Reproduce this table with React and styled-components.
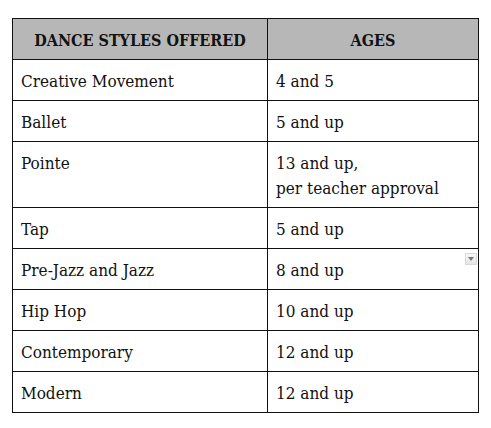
import React from "react";
import styled, { createGlobalStyle } from "styled-components";

const GlobalStyle = createGlobalStyle`
  body {
    margin: 0;
    background: #ffffff;
    font-family: "DejaVu Serif Condensed", "DejaVu Serif", "Liberation Serif", serif;
  }
`;

const Page = styled.div`
  padding: 18px 0 0 12px;
`;

const Table = styled.table`
  border-collapse: collapse;
  width: 466px;
  table-layout: fixed;
  color: #111;
  font-size: 17px;
  line-height: 25px;
`;

const Th = styled.th`
  box-sizing: border-box;
  width: ${(p) => p.w}px;
  background: #b7b7b7;
  border: 1px solid #111;
  padding: 9px 8px 6px;
  font-size: 16px;
  font-weight: bold;
  text-transform: uppercase;
  text-align: center;
`;

const Td = styled.td`
  position: relative;
  border: 1px solid #111;
  padding: 9px 8px 6px;
  text-align: left;
  vertical-align: top;
`;

const DropButton = styled.span`
  position: absolute;
  top: 4px;
  right: 1px;
  width: 12px;
  height: 12px;
  box-sizing: border-box;
  border: 1px solid #d8d8d8;
  background: linear-gradient(#f7f7f7, #e6e6e6);
  display: flex;
  align-items: center;
  justify-content: center;
`;

const rows = [
  ["Creative Movement", ["4 and 5"]],
  ["Ballet", ["5 and up"]],
  ["Pointe", ["13 and up,", "per teacher approval"]],
  ["Tap", ["5 and up"]],
  ["Pre-Jazz and Jazz", ["8 and up"], true],
  ["Hip Hop", ["10 and up"]],
  ["Contemporary", ["12 and up"]],
  ["Modern", ["12 and up"]],
];

export default function App() {
  return (
    <>
      <GlobalStyle />
      <Page>
        <Table>
          <thead>
            <tr>
              <Th w={255}>Dance Styles Offered</Th>
              <Th w={211}>Ages</Th>
            </tr>
          </thead>
          <tbody>
            {rows.map(([style, ages, drop]) => (
              <tr key={style}>
                <Td>{style}</Td>
                <Td>
                  {ages.map((a, i) => (
                    <div key={i}>{a}</div>
                  ))}
                  {drop && (
                    <DropButton>
                      <svg width="6" height="4" viewBox="0 0 6 4">
                        <path d="M0 0h6L3 4z" fill="#777" />
                      </svg>
                    </DropButton>
                  )}
                </Td>
              </tr>
            ))}
          </tbody>
        </Table>
      </Page>
    </>
  );
}
